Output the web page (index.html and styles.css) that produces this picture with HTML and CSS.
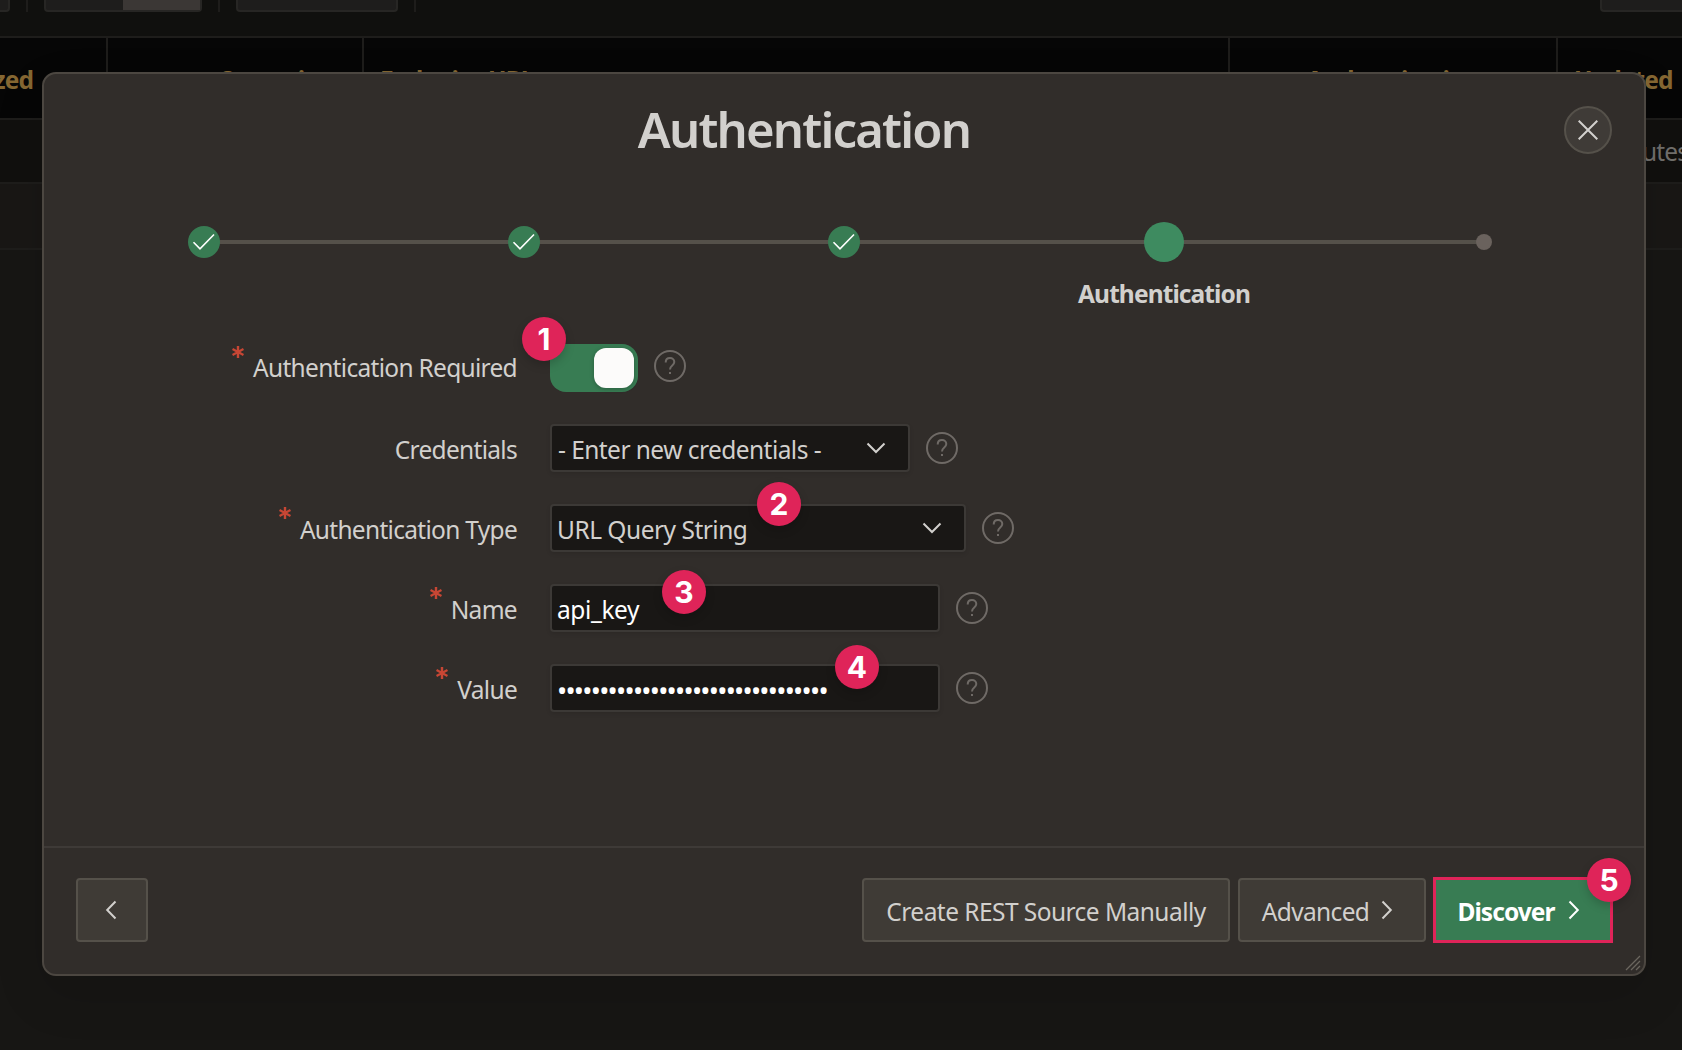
FILE: index.html
```html
<!DOCTYPE html>
<html lang="en">
<head>
<meta charset="utf-8">
<title>Authentication</title>
<link rel="stylesheet" href="styles.css">
</head>
<body>
<svg class="sprite" aria-hidden="true">
  <symbol id="check" viewBox="0 0 32 32"><path d="M5.500 16.200l6.500 6.600L26 8.500" /></symbol>
  <symbol id="down" viewBox="0 0 20 12"><path d="M1.500 1.500L10 10l8.500-8.500" /></symbol>
  <symbol id="right" viewBox="0 0 12 20"><path d="M1.500 1.500L9.800 10l-8.300 8.500" /></symbol>
  <symbol id="left" viewBox="0 0 12 20"><path d="M10.500 1.500L2.200 10l8.300 8.500" /></symbol>
  <symbol id="required" viewBox="0 0 12 12"><path d="M6 0v12M.5 3l11 6M.5 9l11-6" /></symbol>
  <symbol id="help" viewBox="0 0 32 32"><circle cx="16" cy="16" r="15" /><path d="M11.700 12.500c0-2.700 1.800-4.400 4.300-4.400s4.300 1.700 4.300 4c0 3.400-4.300 3.400-4.300 7.300" /><path d="M16 22v2" /></symbol>
</svg>

<div class="page">
  <div class="toolbar">
    <span class="tool tool-first"></span>
    <span class="divider"></span>
    <span class="tool tool-group"><span class="tool-half"></span><span class="tool-half tool-on"></span></span>
    <span class="divider"></span>
    <span class="tool tool-wide"></span>
    <span class="divider"></span>
    <span class="tool tool-last"></span>
  </div>
  <div class="grid-head">
    <span class="cell cell-end cell-sync">Last Synchronized</span>
    <span class="cell cell-end">Operations</span>
    <span class="cell">Endpoint URL</span>
    <span class="cell cell-center">Authentication</span>
    <span class="cell">Updated</span>
  </div>
  <div class="grid-row"><span class="updated">minutes ago</span></div>
  <div class="grid-row grid-row-alt"></div>
</div>

<section class="dialog" role="dialog">
  <header class="dialog-head">
    <h1 class="dialog-title">Authentication</h1>
    <button class="close" aria-label="Close"><svg viewBox="0 0 20 20"><path d="M.7.7l18.600 18.600M19.300.7L.7 19.300" /></svg></button>
  </header>

  <ol class="steps">
    <li class="step"><span class="dot done"><svg><use href="#check" /></svg></span></li>
    <li class="step"><span class="dot done"><svg><use href="#check" /></svg></span></li>
    <li class="step"><span class="dot done"><svg><use href="#check" /></svg></span></li>
    <li class="step"><span class="dot current"></span><span class="step-label">Authentication</span></li>
    <li class="step"><span class="dot todo"></span></li>
  </ol>

  <div class="form">
    <div class="row">
      <span class="label"><svg class="required"><use href="#required" /></svg>Authentication Required</span>
      <span class="switch"><span class="knob"></span><b class="badge badge-1">1</b></span>
      <svg class="help"><use href="#help" /></svg>
    </div>
    <div class="row">
      <span class="label">Credentials</span>
      <span class="field select w-cred">- Enter new credentials -<svg class="caret"><use href="#down" /></svg></span>
      <svg class="help"><use href="#help" /></svg>
    </div>
    <div class="row">
      <span class="label"><svg class="required"><use href="#required" /></svg>Authentication Type</span>
      <span class="field select w-type">URL Query String<svg class="caret"><use href="#down" /></svg><b class="badge badge-2">2</b></span>
      <svg class="help"><use href="#help" /></svg>
    </div>
    <div class="row">
      <span class="label"><svg class="required"><use href="#required" /></svg>Name</span>
      <span class="field text">api_key<b class="badge badge-3">3</b></span>
      <svg class="help"><use href="#help" /></svg>
    </div>
    <div class="row">
      <span class="label"><svg class="required"><use href="#required" /></svg>Value</span>
      <span class="field text"><span class="secret">••••••••••••••••••••••••••••••••</span><b class="badge badge-4">4</b></span>
      <svg class="help"><use href="#help" /></svg>
    </div>
  </div>

  <footer class="dialog-foot">
    <button class="btn btn-back" aria-label="Back"><svg class="arrow"><use href="#left" /></svg></button>
    <button class="btn btn-manual">Create REST Source Manually</button>
    <button class="btn btn-adv">Advanced<svg class="arrow"><use href="#right" /></svg></button>
    <button class="btn btn-go">Discover<svg class="arrow"><use href="#right" /></svg><b class="badge badge-5">5</b></button>
  </footer>
  <svg class="resize" viewBox="0 0 16 16"><path d="M1 15L15 1M6 15l9-9M11 15l4-4" /></svg>
</section>
</body>
</html>
```
FILE: styles.css
```css
* { box-sizing: border-box; }

body {
  margin: 0;
  width: 1682px;
  height: 1050px;
  overflow: hidden;
  position: relative;
  background: #171614;
  color: #d2d0cd;
  font: 24.5px/32px "Noto Sans", "Open Sans", sans-serif;
  letter-spacing: -0.65px;
}

.sprite { display: none; }
svg { fill: none; stroke: currentColor; stroke-width: 2; }

/* page behind the dialog */
.toolbar {
  display: flex;
  align-items: flex-start;
  height: 38px;
  background: #10100e;
  border-bottom: 2px solid #1e1d1b;
}
.tool {
  height: 12px;
  background: #1e1d1c;
  border: 2px solid #272624;
  border-top: 0;
  border-radius: 0 0 4px 4px;
}
.tool-first { width: 10px; border-left: 0; border-radius: 0 0 4px 0; margin-right: 16px; }
.divider { width: 2px; height: 12px; background: #1e1d1b; margin-right: 16px; }
.tool-group { display: flex; width: 158px; margin-right: 16px; }
.tool-half { flex: 1; }
.tool-on { background: #3b3735; }
.tool-wide { width: 162px; margin-right: 16px; }
.tool-last { width: 82px; margin-left: auto; border-right: 0; border-radius: 0 0 0 4px; }

.grid-head {
  display: grid;
  grid-template-columns: 108px 256px 866px 328px 124px;
  height: 82px;
  background: #060606;
  border-bottom: 2px solid #1e1d1b;
  color: #856732;
  font-weight: 700;
  letter-spacing: -0.9px;
}
.cell {
  display: flex;
  align-items: center;
  padding: 3px 17px 0 16px;
  border-right: 2px solid #1e1d1b;
  overflow: hidden;
  white-space: nowrap;
}
.cell:last-child { border-right: 0; }
.cell-end { justify-content: flex-end; }
.cell-sync { padding-right: 73px; }
.cell-center { justify-content: center; }

.grid-row {
  display: flex;
  justify-content: flex-end;
  align-items: center;
  height: 64px;
  padding-top: 2px;
  background: #11100e;
  border-bottom: 2px solid #1e1d1b;
  color: #716f6c;
  overflow: hidden;
  white-space: nowrap;
}
.grid-row-alt { height: 66px; background: #191715; }
.updated { width: 82px; letter-spacing: -0.8px; }

/* dialog */
.dialog {
  position: absolute;
  left: 42px;
  top: 72px;
  width: 1604px;
  height: 904px;
  display: flex;
  flex-direction: column;
  background: #312d2a;
  border: 2px solid #4c4741;
  border-radius: 14px;
  box-shadow: 0 20px 50px rgba(0, 0, 0, 0.12);
}
.dialog-head {
  display: flex;
  align-items: center;
  height: 112px;
  padding-right: 32px;
}
.dialog-title {
  flex: 1;
  margin: -2px 0 0;
  text-align: center;
  font-size: 49px;
  line-height: 64px;
  font-weight: 600;
  letter-spacing: -1.8px;
}
button { font: inherit; letter-spacing: inherit; color: inherit; }
.close {
  display: grid;
  place-items: center;
  width: 48px;
  height: 48px;
  padding: 0;
  background: #3f3b37;
  border: 2px solid #55514a;
  border-radius: 50%;
}
.close svg { width: 20px; height: 20px; }

.steps {
  display: grid;
  grid-template-columns: repeat(5, 320px);
  height: 158px;
  margin: 0;
  padding: 36px 0 0;
  list-style: none;
}
.step {
  display: flex;
  flex-direction: column;
  align-items: center;
  background: linear-gradient(#55514a, #55514a) 0 18px / 100% 4px no-repeat;
}
.step:first-child { background-position: 160px 18px; background-size: 160px 4px; }
.step:last-child { background-size: 160px 4px; }
.dot { border-radius: 50%; }
.done { width: 32px; height: 32px; margin-top: 4px; background: #387c53; color: #fff; }
.done svg { display: block; width: 32px; height: 32px; stroke-width: 1.6; }
.current { width: 40px; height: 40px; background: #3e8b60; }
.todo { width: 16px; height: 16px; margin-top: 12px; background: #6a625d; }
.step-label { margin-top: 16px; font-weight: 700; letter-spacing: -0.9px; }

.form {
  display: flex;
  flex: 1;
  flex-direction: column;
  gap: 32px;
}
.row { display: flex; align-items: center; height: 48px; }
.label {
  display: flex;
  justify-content: flex-end;
  width: 473px;
  margin-right: 33px;
  padding-top: 3px;
  letter-spacing: -0.7px;
  white-space: nowrap;
}
.row:first-child .label { padding: 0; margin-top: -1px; }
.row:first-child .required { margin-top: -6px; }
.row:first-child .help { margin-top: -4px; }
.required {
  width: 12px;
  height: 12px;
  margin: -7px 9px 0 0;
  color: #c74634;
  stroke-width: 2.400;
}
.help { flex: none; width: 32px; height: 32px; margin-left: 15.500px; color: #6f6a66; }

.switch {
  position: relative;
  display: flex;
  justify-content: flex-end;
  width: 88px;
  height: 48px;
  padding: 4px;
  background: #387c53;
  border-radius: 16px;
}
.knob { width: 40px; height: 40px; border-radius: 12px; background: #fcfbfa; box-shadow: 0 1px 4px rgba(0, 0, 0, 0.25); }

.field {
  position: relative;
  display: flex;
  align-items: center;
  height: 48px;
  padding: 3px 5px 0;
  background: #191715;
  border: 2px solid #3c3936;
  border-radius: 4px;
  box-shadow: 0 2px 4px rgba(0, 0, 0, 0.1);
  white-space: nowrap;
}
.select { justify-content: space-between; padding-right: 22px; }
.w-cred { width: 360px; padding-left: 6px; letter-spacing: -0.55px; }
.w-type { width: 416px; letter-spacing: -0.5px; }
.text { width: 390px; color: #fff; letter-spacing: -0.4px; }
.caret { width: 20px; height: 12px; margin-top: -3px; }
.secret { font-size: 27px; letter-spacing: -1.72px; margin-top: 3px; }

.badge {
  position: absolute;
  display: grid;
  place-items: center;
  width: 44px;
  height: 44px;
  border-radius: 50%;
  background: #df2459;
  color: #fff;
  font: 700 30px/44px Inter, sans-serif;
  letter-spacing: 0;
  box-shadow: 0 4px 10px rgba(0, 0, 0, 0.18);
}
.badge-1 { left: -28px; top: -27px; }
.badge-2 { left: 205px; top: -24px; }
.badge-3 { left: 110px; top: -16px; }
.badge-4 { left: 283px; top: -21px; }
.badge-5 { right: -21px; top: -22px; }

.dialog-foot {
  display: flex;
  gap: 8px;
  height: 128px;
  padding: 30px 32px 0 32px;
  border-top: 2px solid #3e3a37;
}
.btn {
  display: flex;
  align-items: center;
  justify-content: center;
  height: 64px;
  padding: 3px 0 0;
  background: #3f3b36;
  border: 2px solid #55514a;
  border-radius: 4px;
  white-space: nowrap;
}
.arrow { width: 12px; height: 20px; margin-top: -3px; }
.btn-back { width: 72px; margin-right: auto; padding-right: 2px; }
.btn-manual { width: 368px; letter-spacing: -0.55px; }
.btn-adv { width: 188px; gap: 12px; padding-right: 9px; }
.btn-go {
  position: relative;
  width: 178px;
  gap: 13px;
  padding-right: 9px;
  background: #387c53;
  border-color: #387c53;
  border-radius: 0;
  outline: 3px solid #df2459;
  outline-offset: -2px;
  color: #fff;
  font-weight: 700;
  letter-spacing: -0.95px;
}

.resize {
  position: absolute;
  right: 3px;
  bottom: 3px;
  width: 16px;
  height: 16px;
  color: #6b665f;
  stroke-width: 1.300;
}
```
